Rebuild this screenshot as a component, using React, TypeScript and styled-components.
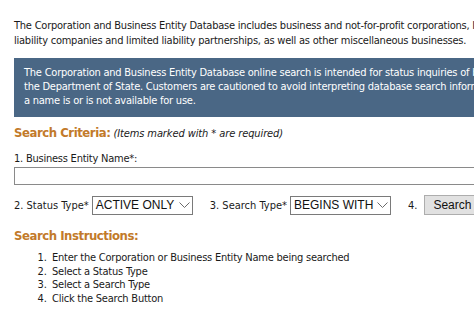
import React from "react";
import styled, { createGlobalStyle } from "styled-components";

const GlobalStyle = createGlobalStyle`
  html, body {
    margin: 0;
    padding: 0;
    background: #ffffff;
    overflow: hidden;
  }
  body {
    font-family: "DejaVu Sans Condensed", "DejaVu Sans", Tahoma, sans-serif;
    font-size: 11px;
    letter-spacing: -0.23px;
    color: #1a1a1a;
  }
`;

const Page = styled.div`
  width: 620px;
  padding: 18px 0 0 14px;
  box-sizing: border-box;
`;

const Intro = styled.p`
  margin: 0 0 10px 0;
  line-height: 15px;
  white-space: nowrap;
`;

const Notice = styled.div`
  background-color: #4a6785;
  color: #ffffff;
  padding: 8px 10px 9px 10px;
  line-height: 14px;
  white-space: nowrap;
`;

const Heading = styled.h2`
  margin: 0;
  font-size: 13px;
  font-weight: bold;
  letter-spacing: -0.45px;
  color: #c27a2a;
  display: flex;
  align-items: baseline;
  gap: 3px;
`;

const Note = styled.span`
  font-size: 11px;
  font-weight: normal;
  font-style: italic;
  letter-spacing: -0.1px;
  color: #1a1a1a;
`;

const Criteria = styled.section`
  margin-top: 8px;
`;

const FieldLabel = styled.label`
  display: block;
  margin-top: 12px;
  line-height: 14px;
`;

const NameInput = styled.input`
  display: block;
  width: 600px;
  height: 18px;
  margin-top: 1px;
  box-sizing: border-box;
  border: 1px solid #8a8a8a;
  padding: 0 3px;
  font-family: "Liberation Sans", Arial, sans-serif;
  font-size: 12px;
`;

const Row = styled.div`
  display: flex;
  align-items: center;
  margin-top: 10px;
  white-space: nowrap;
  letter-spacing: 0;
`;

const Field = styled.div`
  display: flex;
  align-items: center;
  gap: 3px;
  margin-right: 17px;
`;

const SelectBox = styled.div<{ w: number }>`
  display: flex;
  align-items: center;
  justify-content: space-between;
  width: ${({ w }) => w}px;
  height: 19px;
  box-sizing: border-box;
  border: 1px solid #7a7a7a;
  padding: 0 2px 0 3px;
  font-family: "Liberation Sans", Arial, sans-serif;
  font-size: 12px;
  color: #111;
  background: #fff;
`;

const SearchButton = styled.button`
  height: 20px;
  box-sizing: border-box;
  margin-left: 4px;
  padding: 0 8px;
  border: 1px solid #adadad;
  background: #e1e1e1;
  font-family: "Liberation Sans", Arial, sans-serif;
  font-size: 12px;
  color: #111;
`;

const Instructions = styled.section`
  margin-top: 13px;
`;

const Steps = styled.ol`
  margin: 8px 0 0 0;
  padding-left: 36px;
  line-height: 13.5px;
  li::marker {
    letter-spacing: 0;
  }
  li {
    padding-left: 2px;
  }
`;

function Chevron() {
  return (
    <svg width="11" height="7" viewBox="0 0 11 7" fill="none">
      <path d="M0.5 0.5 L5.5 5.5 L10.5 0.5" stroke="#6a6a6a" strokeWidth="1" />
    </svg>
  );
}

export default function App() {
  return (
    <>
      <GlobalStyle />
      <Page>
        <Intro>
          The Corporation and Business Entity Database includes business and not-for-profit corporations, limited
          <br />
          liability companies and limited liability partnerships, as well as other miscellaneous businesses.
        </Intro>
        <Notice>
          The Corporation and Business Entity Database online search is intended for status inquiries of business entities
          <br />
          the Department of State. Customers are cautioned to avoid interpreting database search information as to whether
          <br />
          a name is or is not available for use.
        </Notice>

        <Criteria>
          <Heading>
            Search Criteria:<Note>(Items marked with * are required)</Note>
          </Heading>
          <FieldLabel htmlFor="entityName">1. Business Entity Name*:</FieldLabel>
          <NameInput id="entityName" type="text" />
          <Row>
            <Field>
              2. Status Type*
              <SelectBox w={101}>
                ACTIVE ONLY <Chevron />
              </SelectBox>
            </Field>
            <Field>
              3. Search Type*
              <SelectBox w={101}>
                BEGINS WITH <Chevron />
              </SelectBox>
            </Field>
            <Field>
              4.
              <SearchButton type="button">Search the Database</SearchButton>
            </Field>
          </Row>
        </Criteria>

        <Instructions>
          <Heading>Search Instructions:</Heading>
          <Steps>
            <li>Enter the Corporation or Business Entity Name being searched</li>
            <li>Select a Status Type</li>
            <li>Select a Search Type</li>
            <li>Click the Search Button</li>
          </Steps>
        </Instructions>
      </Page>
    </>
  );
}
